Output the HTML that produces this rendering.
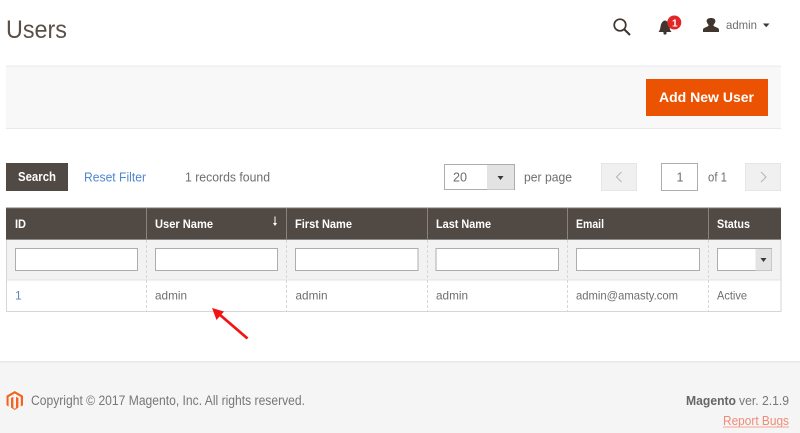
<!DOCTYPE html>
<html lang="en">
<head>
<meta charset="utf-8">
<title>Users</title>
<style>
html,body{margin:0;padding:0;background:#fff;width:800px;height:433px;overflow:hidden}
svg{display:block;filter:blur(.3px)}
text{font-family:"Liberation Sans",sans-serif;font-size:12px;fill:#6e6e6e}
.h{font-weight:bold;fill:#fff;font-size:12px}
.c{fill:#777}
</style>
</head>
<body>
<svg xmlns="http://www.w3.org/2000/svg" width="800" height="433" viewBox="0 0 800 433">
<rect width="800" height="433" fill="#fff"/>
<text x="6" y="38" style="font-size:25px;fill:#5a5048" textLength="61" lengthAdjust="spacingAndGlyphs">Users</text>

<!-- top icons -->
<circle cx="620" cy="25" r="5.800" fill="none" stroke="#41362f" stroke-width="1.700"/>
<path d="M624.200 29.300 L630 35" stroke="#41362f" stroke-width="2.100" fill="none"/>
<path d="M658.500 32 C660.500 30 660.300 26.500 661 24.500 C661.700 22.500 663.300 20.500 665 20.500 C666.700 20.500 668.300 22.500 669 24.500 C669.700 26.500 669.500 30 671.500 32 Z" fill="#41362f"/>
<circle cx="665" cy="33" r="1.600" fill="#41362f"/>
<circle cx="674.300" cy="22.500" r="7" fill="#e22626"/>
<text x="672" y="26.300" style="font-size:10px;font-weight:bold;fill:#fff">1</text>
<path d="M703 32 L703 29.500 C703 27.500 708 27 708.600 25.500 C708.600 24.500 706.600 23 706.600 21 C706.600 19 708.500 18 711 18 C713.500 18 715.400 19 715.400 21 C715.400 23 713.400 24.500 713.400 25.500 C714 27 719 27.500 719 29.500 L719 32 Z" fill="#41362f"/>
<text x="726" y="29" textLength="31" lengthAdjust="spacingAndGlyphs" style="fill:#6f6f6f">admin</text>
<path d="M763 23.500 H769.500 L766.200 27.200 Z" fill="#41362f"/>

<!-- action bar -->
<rect x="6" y="66" width="775" height="63" fill="#f8f8f8"/>
<rect x="6" y="65.500" width="775" height="1.500" fill="#efefef"/>
<rect x="6" y="128" width="775" height="1" fill="#e8e8e8"/>
<rect x="646" y="79" width="122" height="37" fill="#eb5202"/>
<text x="659" y="102" textLength="95" lengthAdjust="spacingAndGlyphs" style="font-size:14px;font-weight:bold;fill:#fff">Add New User</text>

<!-- grid toolbar -->
<rect x="6" y="163" width="62" height="28" fill="#514943"/>
<text x="18" y="181" textLength="38" lengthAdjust="spacingAndGlyphs" style="font-size:12.500px;font-weight:bold;fill:#fff">Search</text>
<text x="84" y="181.500" textLength="62" lengthAdjust="spacingAndGlyphs" style="fill:#4f86d0;font-size:12.500px">Reset Filter</text>
<text x="185" y="181.500" textLength="85" lengthAdjust="spacingAndGlyphs" style="font-size:12.500px">1 records found</text>

<rect x="444.500" y="164.500" width="70" height="25" fill="#fff" stroke="#adadad"/>
<rect x="487" y="165" width="27" height="24.500" fill="#e3e3e3"/>
<path d="M497.500 176 H503.500 L500.500 180 Z" fill="#41362f"/>
<text x="453" y="181.500" textLength="14" lengthAdjust="spacingAndGlyphs" style="font-size:12.500px">20</text>
<text x="524" y="181.500" textLength="48" lengthAdjust="spacingAndGlyphs" style="font-size:12.500px">per page</text>

<rect x="601.500" y="163.500" width="35" height="27" fill="#f0f0f0" stroke="#e6e6e6" stroke-width="1"/>
<path d="M621.500 172 L616.500 177 L621.500 182" fill="none" stroke="#b5b5b5" stroke-width="1"/>
<rect x="661.500" y="163.500" width="36" height="27" fill="#fff" stroke="#adadad"/>
<text x="676.500" y="181.500" style="font-size:12.500px">1</text>
<text x="708" y="181.500" textLength="19" lengthAdjust="spacingAndGlyphs" style="font-size:12.500px">of 1</text>
<rect x="745.500" y="163.500" width="35" height="27" fill="#f0f0f0" stroke="#e6e6e6" stroke-width="1"/>
<path d="M761 172 L766 177 L761 182" fill="none" stroke="#b5b5b5" stroke-width="1"/>

<!-- table -->
<rect x="6" y="208" width="775" height="32" fill="#514943"/>
<rect x="6" y="207.500" width="775" height="1" fill="#7d746e"/>
<rect x="6" y="239" width="775" height="1" fill="#8a8a8a"/>
<rect x="6.500" y="240" width="774" height="40" fill="#f2f2f2"/>
<rect x="6" y="279.500" width="775" height="1" fill="#e3e3e3"/>
<rect x="6" y="311" width="775" height="1" fill="#d6d6d6"/>
<rect x="6" y="240" width="1" height="72" fill="#d6d6d6"/>
<rect x="780.500" y="240" width="1" height="72" fill="#d6d6d6"/>

<g fill="#8a817b">
<rect x="146" y="208" width="1" height="31"/>
<rect x="286" y="208" width="1" height="31"/>
<rect x="427" y="208" width="1" height="31"/>
<rect x="567" y="208" width="1" height="31"/>
<rect x="708" y="208" width="1" height="31"/>
</g>
<g stroke="#d6d6d6" stroke-dasharray="3 2" stroke-width="1" fill="none">
<path d="M146.500 240V311"/>
<path d="M286.500 240V311"/>
<path d="M427.500 240V311"/>
<path d="M567.500 240V311"/>
<path d="M708.500 240V311"/>
</g>

<text class="h" x="15" y="228" textLength="11" lengthAdjust="spacingAndGlyphs">ID</text>
<text class="h" x="155" y="228" textLength="58" lengthAdjust="spacingAndGlyphs">User Name</text>
<text class="h" x="295" y="228" textLength="57" lengthAdjust="spacingAndGlyphs">First Name</text>
<text class="h" x="436" y="228" textLength="55" lengthAdjust="spacingAndGlyphs">Last Name</text>
<text class="h" x="576" y="228" textLength="28" lengthAdjust="spacingAndGlyphs">Email</text>
<text class="h" x="717" y="228" textLength="33" lengthAdjust="spacingAndGlyphs">Status</text>
<path d="M275 216.500V224" stroke="#fff" stroke-width="1"/>
<path d="M273 223 H277 L275 226 Z" fill="#fff"/>

<g fill="#fff" stroke="#adadad">
<rect x="15.500" y="248.500" width="122" height="22"/>
<rect x="155.500" y="248.500" width="122" height="22"/>
<rect x="295.500" y="248.500" width="122.500" height="22"/>
<rect x="436" y="248.500" width="122.500" height="22"/>
<rect x="576.500" y="248.500" width="123" height="22"/>
<rect x="717.500" y="248.500" width="54" height="22"/>
</g>
<rect x="755.500" y="249" width="16" height="21.500" fill="#e3e3e3"/>
<path d="M760.500 258 H766.500 L763.500 262 Z" fill="#41362f"/>

<text x="15" y="299.500" style="fill:#5b87c4">1</text>
<text x="155" y="299.500" textLength="32" lengthAdjust="spacingAndGlyphs">admin</text>
<text x="295.500" y="299.500" textLength="32" lengthAdjust="spacingAndGlyphs">admin</text>
<text x="436" y="299.500" textLength="32" lengthAdjust="spacingAndGlyphs">admin</text>
<text x="576" y="299.500" textLength="102" lengthAdjust="spacingAndGlyphs">admin@amasty.com</text>
<text x="717" y="299.500" textLength="30" lengthAdjust="spacingAndGlyphs">Active</text>

<!-- arrow -->
<path d="M247.500 338.500 L219 314" stroke="#f01414" stroke-width="2.800" fill="none"/>
<path d="M212 308 L224 311.500 L216.500 320 Z" fill="#f01414"/>

<!-- footer -->
<rect x="0" y="362" width="800" height="71" fill="#f5f5f5"/>
<rect x="0" y="361" width="800" height="1.500" fill="#e6e6e6"/>
<path d="M14.700 391 L23 395.700 V405.300 L20.800 406.500 V397 L14.700 393.500 L8.600 397 V406.500 L6.500 405.300 V395.700 Z" fill="#f26322"/>
<path d="M11 398 L13.400 396.700 V408 L14.700 408.800 L16 408 V396.700 L18.400 398 V407.500 L14.700 410 L11 407.500 Z" fill="#f26322"/>
<text class="c" x="31" y="405" textLength="274" lengthAdjust="spacingAndGlyphs" style="font-size:13.500px">Copyright © 2017 Magento, Inc. All rights reserved.</text>
<text class="c" x="686" y="405" textLength="50" lengthAdjust="spacingAndGlyphs" style="font-size:13px;font-weight:bold;fill:#666">Magento</text>
<text class="c" x="739" y="405" textLength="50" lengthAdjust="spacingAndGlyphs" style="font-size:13px">ver. 2.1.9</text>
<text x="723" y="425" textLength="66" lengthAdjust="spacingAndGlyphs" style="font-size:13px;fill:#ef8b76">Report Bugs</text>
<rect x="723" y="426.500" width="66" height="1" fill="#f3a898"/>
</svg>
</body>
</html>
